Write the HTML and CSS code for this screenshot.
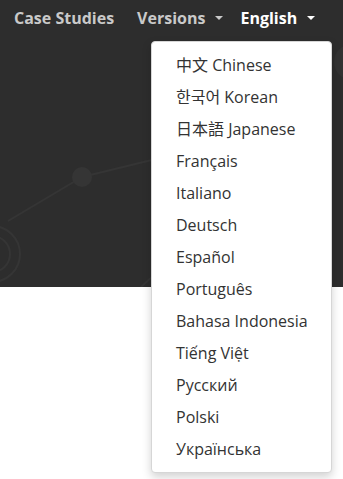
FILE: index.html
```html
<!DOCTYPE html>
<html lang="en">

<head>
    <meta charset="UTF-8">
    <meta name="viewport" content="width=device-width, initial-scale=1.0">
    <title>Languages</title>
    <link rel="stylesheet" href="styles.css">
</head>

<body>
    <!-- Dark hero with nav -->
    <header class="hero">
        <svg class="hero-bg" width="343" height="287" viewBox="0 0 343 287">
            <g fill="none" stroke="#353535" stroke-width="2">
                <line x1="82" y1="177" x2="8" y2="221" />
                <line x1="82" y1="177" x2="160" y2="158" />
                <circle cx="-8" cy="254" r="18" />
                <circle cx="-8" cy="254" r="28" />
                <circle cx="195" cy="335" r="72" />
            </g>
            <circle cx="82" cy="177" r="10" fill="#353535" />
            <circle cx="352" cy="62" r="18" fill="#323232" />
        </svg>

        <nav class="nav">
            <a class="nav-link">Case Studies</a>
            <a class="nav-link">Versions <span class="caret"></span></a>
            <a class="nav-link active">English <span class="caret"></span></a>
        </nav>

        <!-- Language Menu -->
        <ul class="dropdown">
            <li>中文 Chinese</li>
            <li>한국어 Korean</li>
            <li>日本語 Japanese</li>
            <li>Français</li>
            <li>Italiano</li>
            <li>Deutsch</li>
            <li>Español</li>
            <li>Português</li>
            <li>Bahasa Indonesia</li>
            <li>Tiếng Việt</li>
            <li>Русский</li>
            <li>Polski</li>
            <li>Українська</li>
        </ul>
    </header>
</body>

</html>
```

FILE: styles.css
```css
/* General Styles */
* {
    margin: 0;
    padding: 0;
    box-sizing: border-box;
    font-family: "Open Sans", "Noto Sans CJK SC", "Noto Sans CJK KR", sans-serif;
}

body {
    background: #fff;
    height: 100vh;
    overflow: hidden;
}

/* Hero */
.hero {
    position: relative;
    height: 287px;
    background: #2d2d2d;
}

.hero-bg {
    position: absolute;
    top: 0;
    left: 0;
}

/* Nav */
.nav {
    position: relative;
    display: flex;
    gap: 17px;
    padding: 6px 0 0 14px;
}

.nav-link {
    display: flex;
    align-items: center;
    gap: 10px;
    font-size: 16px;
    font-weight: 700;
    line-height: 24px;
    color: #c9c9c9;
}

.nav-link:first-child {
    margin-right: 6px;
}

.nav-link.active {
    color: #fff;
}

.caret {
    width: 0;
    height: 0;
    border-left: 4px solid transparent;
    border-right: 4px solid transparent;
    border-top: 4px solid currentColor;
}

/* Dropdown */
.dropdown {
    position: absolute;
    top: 41px;
    left: 151px;
    width: 181px;
    padding: 7px 0 7px;
    list-style: none;
    background: #fff;
    border: 1px solid #d6d6d6;
    border-radius: 4px;
    box-shadow: 0 4px 10px rgba(0, 0, 0, 0.18);
}

.dropdown li {
    padding-left: 24px;
    font-size: 16px;
    line-height: 32px;
    color: #333;
    white-space: nowrap;
}
```
